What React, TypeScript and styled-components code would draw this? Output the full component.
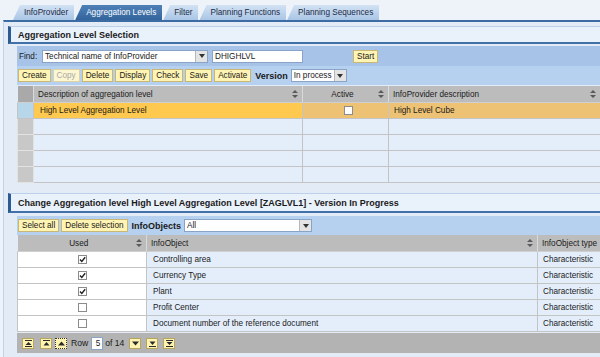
import styled, { createGlobalStyle } from 'styled-components';

const GlobalStyle = createGlobalStyle`
  html, body { margin: 0; padding: 0; }
  body { font-family: "Liberation Sans", Arial, sans-serif; background: #eef3f9; }
`;

const Root = styled.div`
  width: 600px;
  height: 357px;
  overflow: hidden;
  background: #eef3f9;
  color: #1a1a1a;
  font-size: 8.2px;
  display: flex;
  flex-direction: column;
`;

const TabStrip = styled.div`
  display: flex;
  height: 15px;
  margin-top: 5px;
  padding-left: 13px;
  gap: 1px;
`;

const Tab = styled.div<{ $active?: boolean }>`
  display: flex;
  align-items: center;
  padding: 0 6px 0 11px;
  white-space: nowrap;
  clip-path: polygon(7px 0, 100% 0, 100% 100%, 0 100%);
  background: ${(p) =>
    p.$active ? 'linear-gradient(#4f80b8, #33649c)' : 'linear-gradient(#d3e2f3, #a9c5e6)'};
  color: ${(p) => (p.$active ? '#ffffff' : '#1c2a44')};
`;

const Panel = styled.div`
  flex: 1;
  margin-left: 3px;
  border-top: 2px solid #3d6ca4;
  border-left: 1px solid #c2d4ea;
  background: #e2ebf6;
  padding-top: 4px;
`;

const SectionHeader = styled.div<{ $h: number; $gap?: number }>`
  margin: ${(p) => p.$gap ?? 0}px 0 0 4px;
  height: ${(p) => p.$h}px;
  box-sizing: border-box;
  border-left: 3px solid #2c5b91;
  border-top: 1px solid #bcd0ea;
  border-bottom: 2px solid #4271aa;
  background: #e9f1fb;
  padding-left: 7px;
  display: flex;
  align-items: center;
  font-weight: bold;
  font-size: 9px;
  white-space: nowrap;
`;

const Content = styled.div<{ $top: number }>`
  margin: ${(p) => p.$top}px 0 0 13px;
`;

const FindRow = styled.div`
  height: 20px;
  background: #a7c4e8;
  display: flex;
  align-items: center;
  padding-left: 2px;
`;

const Label = styled.span<{ $bold?: boolean; $w?: number }>`
  font-weight: ${(p) => (p.$bold ? 'bold' : 'normal')};
  font-size: ${(p) => (p.$bold ? '9px' : '8.2px')};
  width: ${(p) => (p.$w ? `${p.$w}px` : 'auto')};
  margin: 0 1px 0 ${(p) => (p.$bold ? 2 : 0)}px;
  white-space: nowrap;
`;

const SelectBox = styled.div<{ $w: number }>`
  width: ${(p) => p.$w}px;
  height: 13px;
  box-sizing: border-box;
  background: #ffffff;
  border: 1px solid #8aa4c8;
  display: flex;
  align-items: center;
`;

const SelectText = styled.span`
  flex: 1;
  padding-left: 2px;
  white-space: nowrap;
  overflow: hidden;
`;

const SelectArrow = styled.span`
  width: 11px;
  height: 100%;
  background: #e4e4e4;
  border-left: 1px solid #b8b8b8;
  display: flex;
  align-items: center;
  justify-content: center;
`;

const TextInput = styled.div<{ $w: number; $right?: boolean; $push?: number }>`
  width: ${(p) => p.$w}px;
  height: 13px;
  box-sizing: border-box;
  margin-left: ${(p) => p.$push ?? 0}px;
  background: #ffffff;
  border: 1px solid #8aa4c8;
  padding: 0 2px;
  display: flex;
  align-items: center;
  justify-content: ${(p) => (p.$right ? 'flex-end' : 'flex-start')};
`;

const Toolbar = styled.div`
  height: 19px;
  background: #b6d0ef;
  display: flex;
  align-items: center;
  gap: 2px;
  padding-left: 1px;
`;

const Button = styled.button<{ $push?: number }>`
  height: 13px;
  box-sizing: border-box;
  margin: 0 0 0 ${(p) => p.$push ?? 0}px;
  padding: 0 3px;
  font: inherit;
  color: #1a1a1a;
  background: #fff4b3;
  border: 1px solid #c8b873;
  line-height: 11px;
  white-space: nowrap;
  &:disabled {
    color: #a9a9a9;
    background: #fdf6d2;
    border-color: #ddd2a4;
  }
`;

const Grid = styled.table<{ $w: number; $top?: number }>`
  width: ${(p) => p.$w}px;
  margin-top: ${(p) => p.$top ?? 1}px;
  border-collapse: collapse;
  table-layout: fixed;
`;

const Col = styled.col<{ $w: number }>`
  width: ${(p) => p.$w}px;
`;

const Head = styled.th<{ $dark?: boolean }>`
  height: 16px;
  padding: 0;
  font-weight: normal;
  background: ${(p) => (p.$dark ? '#a9a9a9' : '#bcbcbc')};
  border-right: 1px solid #dadada;
  border-bottom: 1px solid #cfcfcf;
`;

const HeadInner = styled.div<{ $center?: boolean }>`
  display: grid;
  grid-template-columns: 1fr 10px;
  align-items: center;
  padding-left: 4px;
  text-align: ${(p) => (p.$center ? 'center' : 'left')};
  white-space: nowrap;
`;

type CellTone = 'plain' | 'white' | 'sel' | 'selSoft' | 'handle' | 'handleSel';

const toneBg: Record<CellTone, string> = {
  plain: '#e4eefa',
  white: '#ffffff',
  sel: '#ffc84e',
  selSoft: '#eec274',
  handle: '#c8c8c8',
  handleSel: '#b7d6ea',
};

const Cell = styled.td<{ $tone?: CellTone; $center?: boolean; $pad?: number }>`
  height: 15px;
  padding: 0 0 0 ${(p) => p.$pad ?? 5}px;
  background: ${(p) => toneBg[p.$tone ?? 'plain']};
  border: 1px solid ${(p) => (p.$tone === 'handle' ? '#e2e2e2' : '#c4c4c4')};
  text-align: ${(p) => (p.$center ? 'center' : 'left')};
  white-space: nowrap;
  overflow: hidden;
  vertical-align: middle;
`;

const Check = styled.span`
  display: inline-flex;
  width: 9px;
  height: 9px;
  box-sizing: border-box;
  background: #ffffff;
  border: 1px solid #8c8c8c;
  vertical-align: middle;
`;

const Pager = styled.div`
  height: 20px;
  margin-top: 1px;
  background: #b3b3b3;
  display: flex;
  align-items: center;
  padding-left: 5px;
`;

const PagerButton = styled.span<{ $focus?: boolean; $push?: number }>`
  width: 12px;
  height: 11px;
  box-sizing: border-box;
  margin-left: ${(p) => p.$push ?? 0}px;
  background: #fff3b0;
  border: 1px ${(p) => (p.$focus ? 'dotted #333' : 'solid #b6a660')};
  display: flex;
  align-items: center;
  justify-content: center;
`;

const PagerText = styled.span<{ $push?: number }>`
  margin-left: ${(p) => p.$push ?? 0}px;
  font-size: 8.6px;
`;

function SortIcon() {
  return (
    <svg width='6' height='8' viewBox='0 0 6 8'>
      <path d='M3 0 L6 3 L0 3 Z M0 5 L6 5 L3 8 Z' fill='#5a5a5a' />
    </svg>
  );
}

function Arrow() {
  return (
    <svg width='6' height='4' viewBox='0 0 6 4'>
      <path d='M0 0 L6 0 L3 4 Z' fill='#333' />
    </svg>
  );
}

function Tick({ on }: { on: boolean }) {
  return (
    <Check>
      {on && (
        <svg width='7' height='7' viewBox='0 0 7 7'>
          <path d='M1 3.5 L2.8 5.5 L6.2 1.2' stroke='#222' strokeWidth='1.4' fill='none' />
        </svg>
      )}
    </Check>
  );
}

type PagerGlyph = 'first' | 'prevPage' | 'prev' | 'next' | 'nextPage' | 'last';

const glyphs: Record<PagerGlyph, string> = {
  first: 'M0 0 H7 V1 H0 Z M3.5 2 L6.5 5 H0.5 Z M0 6 H7 V7 H0 Z',
  prevPage: 'M0 0 H7 V1 H0 Z M3.5 2 L6.5 5.5 H0.5 Z',
  prev: 'M3.5 1.5 L7 5.5 H0 Z',
  next: 'M0 1.5 H7 L3.5 5.5 Z',
  nextPage: 'M0.5 1.5 H6.5 L3.5 5 Z M0 6 H7 V7 H0 Z',
  last: 'M0 0 H7 V1 H0 Z M0.5 2 H6.5 L3.5 5 Z M0 6 H7 V7 H0 Z',
};

function PagerIcon({ kind }: { kind: PagerGlyph }) {
  return (
    <svg width='7' height='7' viewBox='0 0 7 7'>
      <path d={glyphs[kind]} fill='#2a2a2a' />
    </svg>
  );
}

const tabs = ['InfoProvider', 'Aggregation Levels', 'Filter', 'Planning Functions', 'Planning Sequences'];

const objects = [
  { used: true, name: 'Controlling area' },
  { used: true, name: 'Currency Type' },
  { used: true, name: 'Plant' },
  { used: false, name: 'Profit Center' },
  { used: false, name: 'Document number of the reference document' },
];

export default function App() {
  return (
    <Root>
      <GlobalStyle />
      <TabStrip>
        {tabs.map((t) => (
          <Tab key={t} $active={t === 'Aggregation Levels'}>
            {t}
          </Tab>
        ))}
      </TabStrip>
      <Panel>
        <SectionHeader $h={18}>Aggregation Level Selection</SectionHeader>
        <Content $top={2}>
          <FindRow>
            <Label $w={22}>Find:</Label>
            <SelectBox $w={166}>
              <SelectText>Technical name of InfoProvider</SelectText>
              <SelectArrow>
                <Arrow />
              </SelectArrow>
            </SelectBox>
            <TextInput $w={91} $push={4}>
              DHIGHLVL
            </TextInput>
            <Button $push={50}>Start</Button>
          </FindRow>
          <Toolbar>
            <Button>Create</Button>
            <Button disabled>Copy</Button>
            <Button>Delete</Button>
            <Button>Display</Button>
            <Button>Check</Button>
            <Button>Save</Button>
            <Button>Activate</Button>
            <Label $bold>Version</Label>
            <SelectBox $w={56}>
              <SelectText>In process</SelectText>
              <SelectArrow>
                <Arrow />
              </SelectArrow>
            </SelectBox>
          </Toolbar>
          <Grid $w={583}>
            <colgroup>
              <Col $w={16} />
              <Col $w={269} />
              <Col $w={86} />
              <Col $w={212} />
            </colgroup>
            <thead>
              <tr>
                <Head $dark />
                <Head>
                  <HeadInner>
                    <span>Description of aggregation level</span>
                    <SortIcon />
                  </HeadInner>
                </Head>
                <Head>
                  <HeadInner $center>
                    <span>Active</span>
                    <SortIcon />
                  </HeadInner>
                </Head>
                <Head>
                  <HeadInner>
                    <span>InfoProvider description</span>
                    <SortIcon />
                  </HeadInner>
                </Head>
              </tr>
            </thead>
            <tbody>
              <tr>
                <Cell $tone='handleSel' />
                <Cell $tone='sel' $pad={6}>
                  High Level Aggregation Level
                </Cell>
                <Cell $tone='selSoft' $center>
                  <Tick on={false} />
                </Cell>
                <Cell $tone='selSoft'>High Level Cube</Cell>
              </tr>
              {[0, 1, 2, 3].map((i) => (
                <tr key={i}>
                  <Cell $tone='handle' />
                  <Cell />
                  <Cell />
                  <Cell />
                </tr>
              ))}
            </tbody>
          </Grid>
        </Content>

        <SectionHeader $h={20} $gap={10}>
          Change Aggregation level High Level Aggregation Level [ZAGLVL1] - Version In Progress
        </SectionHeader>
        <Content $top={3}>
          <Toolbar>
            <Button>Select all</Button>
            <Button>Delete selection</Button>
            <Label $bold>InfoObjects</Label>
            <SelectBox $w={128}>
              <SelectText>All</SelectText>
              <SelectArrow>
                <Arrow />
              </SelectArrow>
            </SelectBox>
          </Toolbar>
          <Grid $w={590} $top={0}>
            <colgroup>
              <Col $w={129} />
              <Col $w={391} />
              <Col $w={70} />
            </colgroup>
            <thead>
              <tr>
                <Head>
                  <HeadInner $center>
                    <span>Used</span>
                    <SortIcon />
                  </HeadInner>
                </Head>
                <Head>
                  <HeadInner>
                    <span>InfoObject</span>
                    <SortIcon />
                  </HeadInner>
                </Head>
                <Head>
                  <HeadInner>
                    <span>InfoObject type</span>
                  </HeadInner>
                </Head>
              </tr>
            </thead>
            <tbody>
              {objects.map((o) => (
                <tr key={o.name}>
                  <Cell $tone='white' $center $pad={0}>
                    <Tick on={o.used} />
                  </Cell>
                  <Cell $pad={6}>{o.name}</Cell>
                  <Cell>Characteristic</Cell>
                </tr>
              ))}
            </tbody>
          </Grid>
          <Pager>
            <PagerButton>
              <PagerIcon kind='first' />
            </PagerButton>
            <PagerButton $push={6}>
              <PagerIcon kind='prevPage' />
            </PagerButton>
            <PagerButton $focus $push={3}>
              <PagerIcon kind='prev' />
            </PagerButton>
            <PagerText $push={4}>Row</PagerText>
            <TextInput $w={12} $right $push={3}>
              5
            </TextInput>
            <PagerText $push={2}>of 14</PagerText>
            <PagerButton $push={5}>
              <PagerIcon kind='next' />
            </PagerButton>
            <PagerButton $push={5}>
              <PagerIcon kind='nextPage' />
            </PagerButton>
            <PagerButton $push={5}>
              <PagerIcon kind='last' />
            </PagerButton>
          </Pager>
        </Content>
      </Panel>
    </Root>
  );
}
